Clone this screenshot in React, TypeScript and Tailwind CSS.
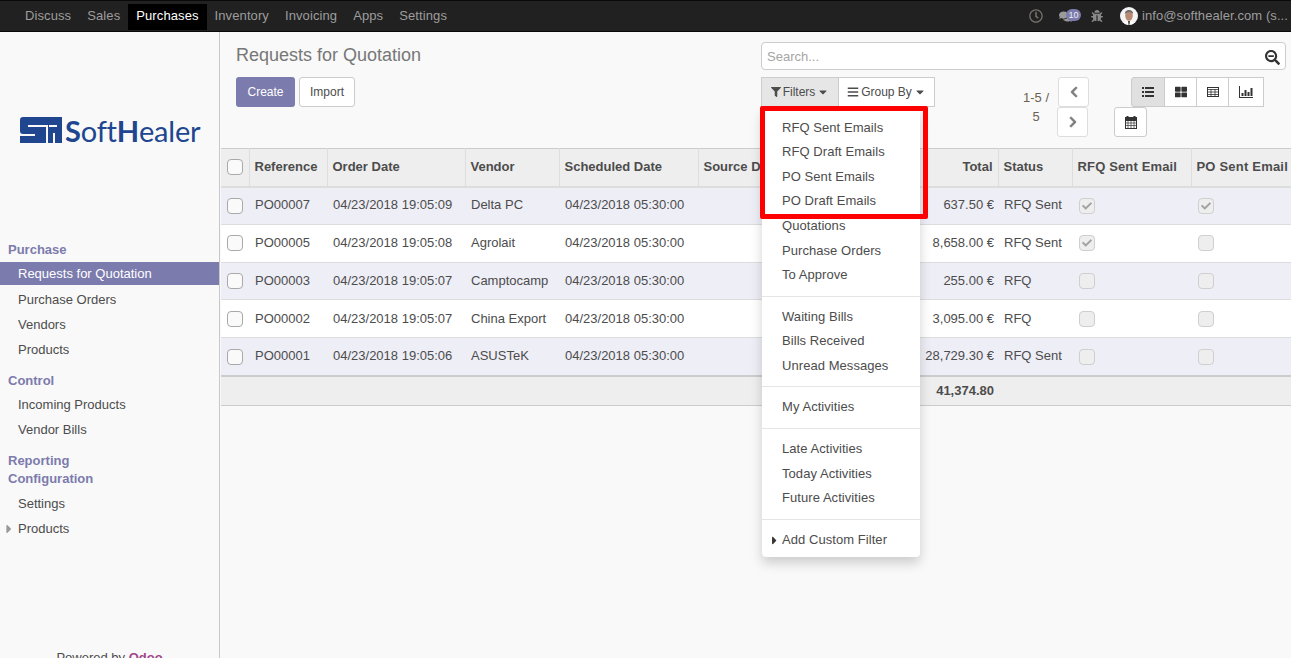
import { FC, ReactNode } from "react";
import {
  FaBars,
  FaBug,
  FaCaretDown,
  FaCaretRight,
  FaCheck,
  FaChevronLeft,
  FaChevronRight,
  FaComments,
  FaFilter,
  FaRegClock,
  FaSearchMinus,
  FaThLarge,
} from "react-icons/fa";

const topMenu = ["Discuss", "Sales", "Purchases", "Inventory", "Invoicing", "Apps", "Settings"];

interface OrderRow {
  ref: string;
  date: string;
  vendor: string;
  total: string;
  status: string;
  rfq: boolean;
  po: boolean;
}

const orders: OrderRow[] = [
  { ref: "PO00007", date: "04/23/2018 19:05:09", vendor: "Delta PC", total: "637.50 €", status: "RFQ Sent", rfq: true, po: true },
  { ref: "PO00005", date: "04/23/2018 19:05:08", vendor: "Agrolait", total: "8,658.00 €", status: "RFQ Sent", rfq: true, po: false },
  { ref: "PO00003", date: "04/23/2018 19:05:07", vendor: "Camptocamp", total: "255.00 €", status: "RFQ", rfq: false, po: false },
  { ref: "PO00002", date: "04/23/2018 19:05:07", vendor: "China Export", total: "3,095.00 €", status: "RFQ", rfq: false, po: false },
  { ref: "PO00001", date: "04/23/2018 19:05:06", vendor: "ASUSTeK", total: "28,729.30 €", status: "RFQ Sent", rfq: false, po: false },
];

const filterGroups = [
  ["RFQ Sent Emails", "RFQ Draft Emails", "PO Sent Emails", "PO Draft Emails", "Quotations", "Purchase Orders", "To Approve"],
  ["Waiting Bills", "Bills Received", "Unread Messages"],
  ["My Activities"],
  ["Late Activities", "Today Activities", "Future Activities"],
];

const Logo: FC = () => (
  <div className="flex items-center text-[#20468f] pl-5 h-[26px]">
    <svg width="42" height="26" viewBox="0 0 42 26" className="shrink-0">
      <path d="M3 0H42V26H0V19H15V17H3Q0 17 0 14V3Q0 0 3 0Z" fill="#20468f" />
      <path d="M8 8H26V10H8ZM26 8H28V26H26ZM29 8H37V10H29ZM33 16H35V26H33Z" fill="#f9f9f9" />
    </svg>
    <span className="ml-[3px] text-[29px] leading-none tracking-[-0.2px] font-['Lato','Liberation_Sans',sans-serif] whitespace-nowrap">
      <span className="font-bold">S</span>oft<span className="font-bold">H</span>ealer
    </span>
  </div>
);

const SideHead: FC<{ children: ReactNode; className?: string }> = ({ children, className }) => (
  <div className={`pl-2 font-bold text-[#7c7bad] leading-[18px] ${className ?? ""}`}>{children}</div>
);

const SideItem: FC<{ label: string; active?: boolean; caret?: boolean }> = ({ label, active, caret }) => (
  <div
    className={`relative pl-[18px] flex items-center ${
      active ? "h-[23px] mb-[3px] pt-px bg-[#7c7bad] text-white" : "h-[25px] text-[#4c4c4c]"
    }`}
  >
    {caret && <FaCaretRight className="absolute left-[1.5px] top-[5px] text-[#999999] text-[14px]" />}
    {label}
  </div>
);

const Sidebar: FC = () => (
  <aside className="w-[220px] shrink-0 border-r border-[#c8c8c8] bg-[#f9f9f9] overflow-hidden">
    <div className="pt-[85px] h-[208px]">
      <Logo />
    </div>
    <SideHead className="mt-[1px] mb-[3px]">Purchase</SideHead>
    <SideItem label="Requests for Quotation" active />
    <SideItem label="Purchase Orders" />
    <SideItem label="Vendors" />
    <SideItem label="Products" />
    <SideHead className="mt-[9px] mb-[3px]">Control</SideHead>
    <SideItem label="Incoming Products" />
    <SideItem label="Vendor Bills" />
    <SideHead className="mt-[9px]">Reporting</SideHead>
    <SideHead className="mb-[4px]">Configuration</SideHead>
    <SideItem label="Settings" />
    <SideItem label="Products" caret />
    <div className="mt-[107px] text-center whitespace-nowrap">
      Powered by <span className="font-bold text-[#a24689]">Odoo</span>
    </div>
  </aside>
);

const Check: FC<{ checked?: boolean; disabled?: boolean }> = ({ checked, disabled }) => (
  <span
    className={`flex items-center justify-center w-4 h-4 rounded-[4px] border ${
      disabled ? "bg-[#eeeeee] border-[#cfcfcf]" : "bg-[#fafafa] border-[#a9a9a9]"
    }`}
  >
    {checked && <FaCheck className="text-[#a3a3a3] text-[10px]" />}
  </span>
);

const ToolBtn: FC<{ children: ReactNode; className?: string }> = ({ children, className }) => (
  <button className={`flex items-center justify-center h-[30px] bg-white border border-[#cccccc] ${className ?? ""}`}>
    {children}
  </button>
);

const ListIcon: FC = () => (
  <svg width="12" height="10" viewBox="0 0 12 10" fill="#333333">
    <path d="M0 0H2V2H0ZM3 0H12V2H3ZM0 4H2V6H0ZM3 4H12V6H3ZM0 8H2V10H0ZM3 8H12V10H3Z" />
  </svg>
);

const TableIcon: FC = () => (
  <svg width="12" height="10" viewBox="0 0 12 10" fill="none" stroke="#333333">
    <rect x="0.5" y="0.5" width="11" height="9" />
    <path d="M0 2.5H12M0 5H12M0 7.5H12M4 2V10M8 2V10" strokeWidth="0.8" />
  </svg>
);

const ChartIcon: FC = () => (
  <svg width="14" height="12" viewBox="0 0 14 12" fill="#333333">
    <path d="M0 0H1V11H14V12H0ZM2.5 7H4.500V10H2.500ZM5.500 4H7.500V10H5.500ZM8.500 6H10.500V10H8.500ZM11.500 2H13.500V10H11.500Z" />
  </svg>
);

const CalendarIcon: FC = () => (
  <svg width="12" height="13" viewBox="0 0 12 13" fill="none" stroke="#333333">
    <path d="M2.500 0V3M9.500 0V3" strokeWidth="2" />
    <rect x="0.500" y="1.500" width="11" height="11" />
    <path d="M0 2.500H12V4.500H0Z" fill="#333333" />
    <path d="M0 7H12M0 9.500H12M3 4V13M6 4V13M9 4V13" strokeWidth="0.7" />
  </svg>
);

const ControlPanel: FC = () => (
  <div className="flex h-[116px] pl-4 shrink-0">
    <div className="w-[525px] pt-[11px]">
      <h1 className="text-[18px] leading-[25px] text-[#777777]">Requests for Quotation</h1>
      <div className="flex gap-1 mt-[9px]">
        <button className="w-[59px] h-[30px] bg-[#7c7bad] rounded-[3px] text-white text-[12px]">Create</button>
        <button className="w-[56px] h-[30px] bg-white border border-[#cccccc] rounded-[3px] text-[12px] text-[#4c4c4c]">
          Import
        </button>
      </div>
    </div>
    <div className="w-[525px] pt-[10px]">
      <div className="flex items-center h-[28px] bg-white border border-[#cccccc] rounded-[4px] pl-[5px] pr-[5px]">
        <span className="flex-1 text-[#a5a5a5] pt-[2px]">Search...</span>
        <FaSearchMinus className="text-[#333333] text-[15px] mt-[2px]" />
      </div>
      <div className="flex mt-[7px]">
        <div className="flex h-[30px] w-[174px] text-[12px]">
          <ToolBtn className="w-[78px] !bg-[#e6e6e6]">
            <FaFilter className="text-[10px] mr-[2px]" />
            Filters
            <FaCaretDown className="text-[12px] ml-[2px]" />
          </ToolBtn>
          <ToolBtn className="w-[97px] -ml-px">
            <FaBars className="text-[12px] mr-[2px]" />
            Group By
            <FaCaretDown className="text-[12px] ml-[2px]" />
          </ToolBtn>
        </div>
        <div className="ml-[87px] w-[28px] mt-[11px] text-center leading-[19px] text-[#6b5f52]">1-5 / 5</div>
        <div className="ml-[8px] flex flex-col text-[#7c7c7c]">
          <ToolBtn className="w-[31px] rounded-[3px] border-[#dddddd]">
            <FaChevronLeft className="text-[12px]" stroke="currentColor" strokeWidth={30} />
          </ToolBtn>
          <ToolBtn className="w-[31px] rounded-[3px] border-[#dddddd] -ml-px">
            <FaChevronRight className="text-[12px]" stroke="currentColor" strokeWidth={30} />
          </ToolBtn>
        </div>
        <div className="ml-[25px] flex flex-col text-[#333333]">
          <div className="flex ml-[17px]">
            <ToolBtn className="w-[34px] !bg-[#e0e0e0] rounded-l-[3px]">
              <ListIcon />
            </ToolBtn>
            <ToolBtn className="w-[33px] -ml-px">
              <FaThLarge className="text-[12px]" />
            </ToolBtn>
            <ToolBtn className="w-[33px] -ml-px">
              <TableIcon />
            </ToolBtn>
            <ToolBtn className="w-[36px] -ml-px">
              <ChartIcon />
            </ToolBtn>
          </div>
          <ToolBtn className="w-[33px] rounded-[3px]">
            <CalendarIcon />
          </ToolBtn>
        </div>
      </div>
    </div>
  </div>
);

const OrdersTable: FC = () => (
  <div className="overflow-hidden pl-px">
    <table className="table-fixed border-collapse w-[1074px]">
      <colgroup>
        <col className="w-[28px]" />
        <col className="w-[78px]" />
        <col className="w-[138px]" />
        <col className="w-[94px]" />
        <col className="w-[139px]" />
        <col className="w-[114px]" />
        <col className="w-[186px]" />
        <col className="w-[74px]" />
        <col className="w-[119px]" />
        <col className="w-[104px]" />
      </colgroup>
      <thead>
        <tr className="h-[38px] bg-[#eeeeee] border-t border-t-[#cccccc] border-b-2 border-b-[#dddddd] text-left font-bold text-[#4c4c4c] whitespace-nowrap">
          <th className="pl-[6px]">
            <Check />
          </th>
          {["Reference", "Order Date", "Vendor", "Scheduled Date", "Source Document"].map((h) => (
            <th key={h} className="pl-[5px] border-l border-[#dddddd] font-bold">
              {h}
            </th>
          ))}
          <th className="pr-[5px] border-l border-[#dddddd] text-right">Total</th>
          <th className="pl-[5px] border-l border-[#dddddd]">Status</th>
          <th className="pl-[5px] border-l border-[#dddddd] tracking-[0.15px]">RFQ Sent Email</th>
          <th className="pl-[5px] border-l border-[#dddddd] tracking-[0.2px]">PO Sent Email</th>
        </tr>
      </thead>
      <tbody>
        {orders.map((o, i) => (
          <tr
            key={o.ref}
            className={`h-[37.8px] last:h-[38.5px] border-b border-[#dddddd] whitespace-nowrap ${i % 2 === 0 ? "bg-[#eeeef6]" : "bg-white"}`}
          >
            <td className="pl-[6px]">
              <Check />
            </td>
            <td className="pl-[6px]">{o.ref}</td>
            <td className="pl-[6px]">{o.date}</td>
            <td className="pl-[6px]">{o.vendor}</td>
            <td className="pl-[6px]">04/23/2018 05:30:00</td>
            <td />
            <td className="pr-[4px] text-right">{o.total}</td>
            <td className="pl-[6px]">{o.status}</td>
            <td className="pl-[7px]">
              <Check checked={o.rfq} disabled />
            </td>
            <td className="pl-[7px]">
              <Check checked={o.po} disabled />
            </td>
          </tr>
        ))}
      </tbody>
      <tfoot>
        <tr className="h-[29.5px] bg-[#eeeeee] border-t-2 border-t-[#cccccc] border-b border-b-[#cccccc]">
          <td colSpan={6} />
          <td className="pr-[4px] text-right font-bold">41,374.80</td>
          <td colSpan={3} />
        </tr>
      </tfoot>
    </table>
  </div>
);

const FilterMenu: FC = () => (
  <div className="absolute left-[762px] top-[109px] w-[158px] pt-[6.8px] pb-[5px] bg-white rounded-b-[4px] shadow-[0_6px_12px_rgba(0,0,0,0.18)] text-[#4c4c4c] tracking-[0.06px] z-10">
    {filterGroups.map((group) => (
      <div key={group[0]} className="border-b border-[#e5e5e5] pb-[8px] mb-[8px]">
        {group.map((item) => (
          <div key={item} className="pl-5 py-[3px] whitespace-nowrap">
            {item}
          </div>
        ))}
      </div>
    ))}
    <div className="relative pl-5 py-[3px]">
      <FaCaretRight className="absolute left-[6px] top-[6px] text-[13px] text-[#333333]" />
      Add Custom Filter
    </div>
  </div>
);

const App: FC = () => {
  return (
    <div className="relative h-[658px] overflow-hidden bg-[#f9f9f9] text-[13px] leading-[18.57px] text-[#4c4c4c] font-['Liberation_Sans',Arial,sans-serif]">
      <header className="flex items-center h-[32px] bg-[#212121] border-y border-[#0a0a0a] text-[#9d9d9d]">
        <nav className="flex pl-[17px] h-[26px] mt-px tracking-[0.1px]">
          {topMenu.map((m) => (
            <span
              key={m}
              className={`flex items-center px-2 ${m === "Purchases" ? "bg-black text-white" : ""}`}
            >
              {m}
            </span>
          ))}
        </nav>
        <div className="ml-auto flex items-center">
          <FaRegClock className="text-[14px] text-[#77736c]" />
          <span className="relative ml-[16px] flex items-center w-[21px]">
            <FaComments className="text-[13px] text-[#9a9a9a]" />
            <span className="absolute left-[7px] top-[-1px] w-[15px] h-[12px] rounded-[6px] bg-[#7c7bad] text-[9px] leading-[12px] text-center text-[#eeeeee]">
              10
            </span>
          </span>
          <FaBug className="ml-[11px] text-[12px] text-[#8a8a8a]" />
          <svg width="18" height="18" viewBox="0 0 18 18" className="ml-[17px] rounded-full">
            <rect width="18" height="18" fill="#f4f4f4" />
            <path d="M3 18C3.500 14 7 14 9 14S14.500 14 15 18Z" fill="#ffffff" />
            <path d="M8 14H10L9.500 18H8.500Z" fill="#444444" />
            <ellipse cx="9" cy="8.500" rx="3.800" ry="5.200" fill="#b98a72" />
            <path d="M4.800 7C4.500 1.500 13.500 1.500 13.200 7C11.500 4.800 6.500 4.800 4.800 7Z" fill="#6e6e6e" />
          </svg>
          <span className="ml-[4px] w-[149px] whitespace-nowrap tracking-[0.08px]">info@softhealer.com (s...</span>
        </div>
      </header>
      <div className="flex h-[626px]">
        <Sidebar />
        <main className="flex-1 min-w-0 flex flex-col">
          <ControlPanel />
          <OrdersTable />
        </main>
      </div>
      <FilterMenu />
      <div className="absolute left-[760px] top-[106px] w-[168px] h-[113px] border-[5px] border-[#ff0000] rounded-[2px] z-20" />
    </div>
  );
};

export default App;
